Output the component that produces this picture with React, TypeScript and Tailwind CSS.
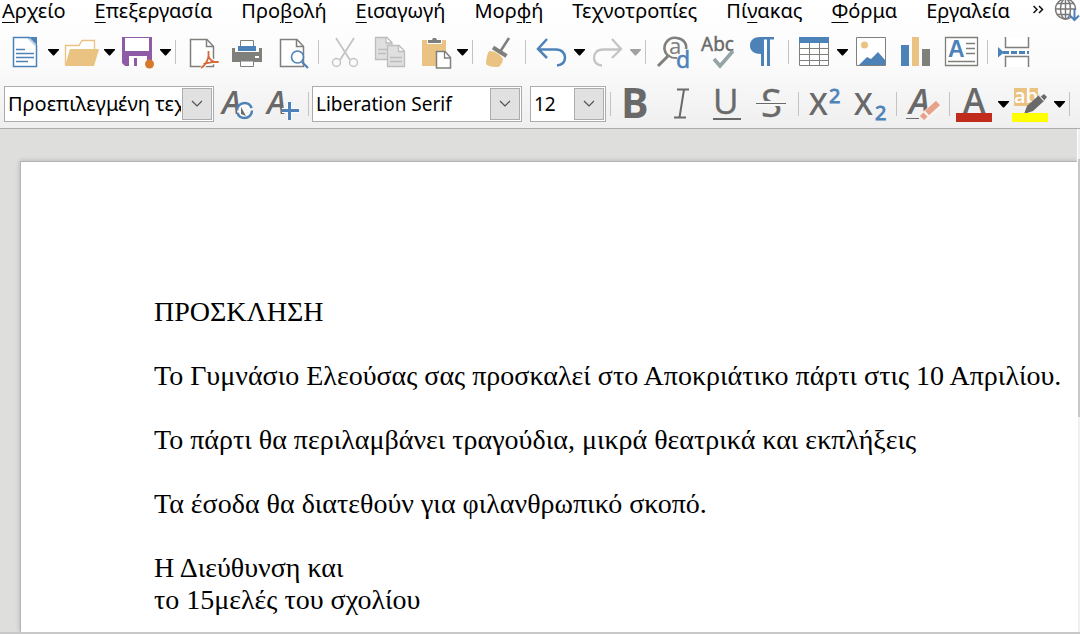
import type { ReactNode } from "react";

const BLUE = "#4d82b8";
const GRAY = "#7f7f7b";
const DARK = "#696969";
const TAN = "#eac282";
const PALE = "#c4c4c4";

const menus: [string, string, string][] = [
  ["", "Α", "ρχείο"],
  ["", "Ε", "πεξεργασία"],
  ["Προ", "β", "ολή"],
  ["", "Ε", "ισαγωγή"],
  ["Μορ", "φ", "ή"],
  ["Τε", "χ", "νοτροπίες"],
  ["Πί", "ν", "ακας"],
  ["", "Φ", "όρμα"],
  ["Ε", "ρ", "γαλεία"],
];

function Tool({ label, children }: { label: string; children: ReactNode }) {
  return (
    <button type="button" aria-label={label} className="h-10 w-[45px] shrink-0">
      <svg width="45" height="40" viewBox="0 0 45 40" fill="none" aria-hidden="true">
        {children}
      </svg>
    </button>
  );
}

function Arrow({ label, muted = false }: { label: string; muted?: boolean }) {
  return (
    <button type="button" aria-label={label} className="h-10 w-[11px] shrink-0">
      <svg width="11" height="40" viewBox="0 0 11 40" aria-hidden="true">
        <path d="M0 17h11v1l-5 5.500h-1l-5-5.500z" fill={muted ? "#a0a0a0" : "#000"} />
      </svg>
    </button>
  );
}

function Sep() {
  return (
    <div className="flex h-10 w-2 shrink-0 items-center justify-center">
      <div className="h-6 w-px bg-[#c3c3c3]" />
    </div>
  );
}

function Combo({ label, value, className }: { label: string; value: string; className: string }) {
  return (
    <div className={`relative h-9 shrink-0 ${className}`}>
      <select
        aria-label={label}
        defaultValue={value}
        className="h-full w-full appearance-none border border-[#ababb0] bg-white pr-8 pl-[3px] text-black"
      >
        <option>{value}</option>
      </select>
      <span className="pointer-events-none absolute inset-y-0.5 right-0.5 flex w-[30px] items-center justify-center border border-[#adadad] bg-[#e1e1e1]">
        <svg width="12" height="8" viewBox="0 0 12 8" fill="none" aria-hidden="true">
          <path d="M1 1l5 5 5-5" stroke="#505050" strokeWidth="1.200" />
        </svg>
      </span>
    </div>
  );
}

function MenuBar() {
  return (
    <nav className="flex h-6 items-start justify-between pl-0.5 text-xl leading-[22px]">
      <div className="flex gap-[29px]">
        {menus.map(([before, key, after]) => (
          <button key={before + key + after} type="button" className="shrink-0 whitespace-nowrap">
            {before}
            <span className="underline decoration-1 underline-offset-4">{key}</span>
            {after}
          </button>
        ))}
      </div>
      <div className="flex shrink-0 items-center gap-2">
        <button type="button" aria-label="Περισσότερα">
          <svg width="13" height="24" viewBox="0 0 13 24" fill="none" aria-hidden="true">
            <path d="M0.500 6l3.500 3.500L0.500 13M6 6l3.500 3.500L6 13" stroke="#111" strokeWidth="1.500" />
          </svg>
        </button>
        <button type="button" aria-label="Ενημέρωση">
          <svg width="26" height="24" viewBox="0 0 26 24" fill="none" aria-hidden="true">
            <g stroke="#777" strokeWidth="1.400">
              <circle cx="11.500" cy="9" r="10" />
              <ellipse cx="11.500" cy="9" rx="5" ry="10" />
              <path d="M11.500-1v20M1.500 9h20M3 3.500h17M3 14.500h17" />
            </g>
            <path d="M17 10h9v12h-9z" fill="#fff" />
            <path d="M20.500 9v11M16 15.500l4.500 4.500 4.500-4.500" stroke={BLUE} strokeWidth="2" />
          </svg>
        </button>
      </div>
    </nav>
  );
}

function StandardBar() {
  return (
    <div className="flex items-center pl-[3px]" role="toolbar" aria-label="Τυπική">
      <Tool label="Νέο">
        <path d="M10.500 5.500H26l7.500 8v21h-23z" fill="#fff" stroke={BLUE} strokeWidth="1.500" />
        <path d="M24 5h10v10z" fill={BLUE} />
        <path d="M25 7l8 8v-3l-6-6z" fill="#bcd0e5" />
        <path d="M13 17.500h9M13 21.500h18M13 25.500h18M13 29.500h12" stroke={BLUE} strokeWidth="1.500" />
      </Tool>
      <Arrow label="Νέο: επιλογές" />
      <Tool label="Άνοιγμα">
        <path d="M6.500 33V13.500H20l3-5h12.500V17" fill="#fff" stroke={TAN} strokeWidth="1.300" />
        <path d="M11 17h29l-5 17H6z" fill={TAN} />
      </Tool>
      <Arrow label="Άνοιγμα: επιλογές" />
      <Tool label="Αποθήκευση">
        <path d="M7 5h30v29H10l-3-3z" fill="#8e5ba6" />
        <path d="M10 6h24v13H10zM14 24h18v10H14z" fill="#fff" />
        <path d="M19 26h3v8h-3z" fill="#8e5ba6" />
        <circle cx="34.500" cy="32" r="4.500" fill="#d57a2d" />
      </Tool>
      <Arrow label="Αποθήκευση: επιλογές" />
      <Sep />
      <Tool label="Εξαγωγή ως PDF">
        <path d="M11.500 7.500H28l6.500 7v20h-23z" fill="#fff" stroke={GRAY} strokeWidth="1.500" />
        <path d="M27.500 8v6.500h7" stroke={GRAY} strokeWidth="1.500" />
        <path d="M22 37c3-2 6-8 7.500-13V19v5c2 4 5 7 10 6-6 0-11 1-15 3" stroke="#fff" strokeWidth="4" />
        <path d="M22 36c4-2 7-8 7.500-12V19v5c1 4 5 7 10 6-6-1-11 1-15 2" stroke="#d46a3a" strokeWidth="1.800" />
      </Tool>
      <Tool label="Εκτύπωση">
        <path d="M8 16h3v4h24v-4h3v14H8z" fill={GRAY} />
        <path d="M16.500 8.500h13v6h-13z" fill="#fff" stroke={GRAY} />
        <path d="M14 14h18v5H14z" fill={BLUE} />
        <path d="M16.500 29h13v5.500h-13z" fill="#fff" stroke={GRAY} />
        <path d="M31 24h4v2h-4z" fill="#fff" />
      </Tool>
      <Tool label="Προεπισκόπηση">
        <path d="M11.500 7.500H28l6.500 7v20h-23z" fill="#fff" stroke={GRAY} strokeWidth="1.500" />
        <path d="M27.500 8v6.500h7" stroke={GRAY} strokeWidth="1.500" />
        <circle cx="28.500" cy="25" r="6" fill="#fff" stroke={BLUE} strokeWidth="1.600" />
        <path d="M33 30l6 6" stroke={BLUE} strokeWidth="2.200" />
      </Tool>
      <Sep />
      <Tool label="Αποκοπή">
        <g stroke={PALE} strokeWidth="1.800">
          <path d="M14 6l14 22M32 6L18 28" />
          <circle cx="14.500" cy="30.500" r="4" strokeWidth="1.500" />
          <circle cx="31.500" cy="30.500" r="4" strokeWidth="1.500" />
        </g>
      </Tool>
      <Tool label="Αντιγραφή">
        <g fill="#dfdfdf" stroke="#bdbdbd" strokeWidth="1.300">
          <path d="M8.500 5.500H20l5 5v17H8.500zM19 5.500V11h6M11 17.500h10M11 21.500h8" />
          <path d="M20.500 13.500H32l5.500 5.500v15.500h-17zM31.500 13.500V19.500h6M23 25.500h12M23 29.500h12" />
        </g>
      </Tool>
      <Tool label="Επικόλληση">
        <path d="M10 8h24v26H10z" fill={TAN} />
        <path d="M15 7h5c0-3 5-3 5 0h5v5H15z" fill="#fff" />
        <path d="M16 8h4l1-2h3l1 2h4v3H16z" fill={GRAY} />
        <path d="M24.500 19.500H33l5.500 6v10.500h-14z" fill="#fff" stroke={GRAY} strokeWidth="1.500" />
        <path d="M32.500 20v6h6" stroke={GRAY} strokeWidth="1.300" />
      </Tool>
      <Arrow label="Επικόλληση: επιλογές" />
      <Sep />
      <Tool label="Αντιγραφή μορφοποίησης">
        <path d="M13 19c6 0 11 3 14 8l-1 4-3 4c-5 0-10 0-13-3 0-5 1-9 3-13z" fill={TAN} />
        <path d="M17 15.500l13.500 8.500" stroke={GRAY} strokeWidth="4" />
        <path d="M33 6L24 20" stroke={GRAY} strokeWidth="2.600" />
      </Tool>
      <Sep />
      <Tool label="Αναίρεση">
        <path d="M18 7L9 17l9 9M9 17.500h18c6 0 9 4 9 8 0 5-3 7.500-8 8" stroke={BLUE} strokeWidth="2.500" />
      </Tool>
      <Arrow label="Αναίρεση: επιλογές" />
      <Tool label="Επανάληψη">
        <path d="M27 7l9 10-9 9M36 17.500H18c-6 0-9 4-9 8 0 5 3 7.500 8 8" stroke={PALE} strokeWidth="2.300" />
      </Tool>
      <Arrow label="Επανάληψη: επιλογές" muted />
      <Sep />
      <Tool label="Εύρεση και αντικατάσταση">
        <path d="M19 24C10 14 20 4 28 6c7 1 10 6 9 11" stroke={GRAY} strokeWidth="2.600" />
        <path d="M19 23c3 3 5 3 9 3" stroke={GRAY} strokeWidth="2" />
        <path d="M19 24L9 34" stroke={GRAY} strokeWidth="3" />
        <text x="20" y="22" fontSize="22" fill={GRAY} fontFamily="Noto Sans">a</text>
        <text x="27" y="36" fontSize="23" fill={BLUE} stroke={BLUE} strokeWidth="0.500" fontFamily="Noto Sans">d</text>
      </Tool>
      <Tool label="Ορθογραφικός έλεγχος">
        <text x="7" y="19" fontSize="19" fill={DARK} stroke={DARK} strokeWidth="0.400" fontFamily="Noto Sans">Abc</text>
        <path d="M20 27l6 7 13-15" stroke="#93a3a6" strokeWidth="3.600" />
      </Tool>
      <Tool label="Σημάδια μορφοποίησης">
        <path d="M35 5v2.500h-4V34h-3V7.500h-3V34h-3V22c-7 0-11-3-11-8.500S15 5 21 5z" fill={BLUE} />
      </Tool>
      <Sep />
      <Tool label="Πίνακας">
        <path d="M7.500 5.500h29v28h-29z" fill="#fff" stroke={GRAY} />
        <path d="M17.500 11v23M27.500 11v23M8 16.500h29M8 22.500h29M8 28.500h29" stroke={GRAY} />
        <path d="M7 5h30v6H7z" fill={BLUE} />
      </Tool>
      <Arrow label="Πίνακας: επιλογές" />
      <Tool label="Εικόνα">
        <path d="M8.500 5.500h29v28h-29z" fill="#fff" stroke={GRAY} />
        <circle cx="16.500" cy="13" r="3.500" fill={TAN} />
        <path d="M11 33l8-8 4 2 7-7 7 8v5z" fill={BLUE} />
      </Tool>
      <Tool label="Διάγραμμα">
        <path d="M8 13h8v21H8z" fill={BLUE} />
        <path d="M19 5h7v29h-7z" fill={TAN} />
        <path d="M29 17h8v17h-8z" fill={GRAY} />
      </Tool>
      <Tool label="Πλαίσιο κειμένου">
        <path d="M7.500 5.500h32v28h-32z" fill="#fff" stroke={GRAY} strokeWidth="1.300" />
        <text x="10" y="25" fontSize="23" fontWeight="700" fill={BLUE} fontFamily="Liberation Sans">A</text>
        <path d="M28 11.500h9M28 16.500h9M28 21.500h9M10 29.500h27" stroke={GRAY} strokeWidth="1.500" />
      </Tool>
      <Sep />
      <Tool label="Αλλαγή σελίδας">
        <path d="M14.500 5v10.500h23V5M14.500 35V24.500h23V35" fill="#fff" stroke={GRAY} strokeWidth="1.500" />
        <path d="M7 15l6 5.500-6 5z" fill={BLUE} />
        <path d="M12 20.500h26" stroke={BLUE} strokeWidth="3" strokeDasharray="6 2" />
      </Tool>
    </div>
  );
}

function FormatBar() {
  return (
    <div className="flex items-center pl-1" role="toolbar" aria-label="Μορφοποίηση">
      <Combo label="Τεχνοτροπία παραγράφου" value="Προεπιλεγμένη τεχνοτροπία" className="w-[210px] text-xl" />
      <Tool label="Ενημέρωση τεχνοτροπίας">
        <text x="8" y="30" fontSize="32" fontWeight="600" fontStyle="italic" fill={DARK} fontFamily="Open Sans">A</text>
        <circle cx="30.500" cy="26.500" r="7.500" fill="#fafafa" stroke={BLUE} strokeWidth="2.500" strokeDasharray="21 2.500" />
        <path d="M27 23l5 9-5-2z" fill={DARK} />
      </Tool>
      <Tool label="Νέα τεχνοτροπία">
        <text x="8" y="30" fontSize="32" fontWeight="600" fontStyle="italic" fill={DARK} fontFamily="Open Sans">A</text>
        <path d="M30.500 19v17M23 26.500h17" stroke="#fafafa" strokeWidth="5" />
        <path d="M30.500 18v18M22 26.500h18" stroke={BLUE} strokeWidth="3" />
      </Tool>
      <Sep />
      <Combo label="Γραμματοσειρά" value="Liberation Serif" className="w-[210px] text-[19px]" />
      <div className="w-2 shrink-0" />
      <Combo label="Μέγεθος" value="12" className="w-[76px] text-[19px]" />
      <Sep />
      <Tool label="Έντονα">
        <text x="7" y="34" fontSize="41" fontWeight="700" fill={DARK} fontFamily="Open Sans">B</text>
      </Tool>
      <Tool label="Πλάγια">
        <path d="M18 5.500h12M15 33.500h12M25 5.500l-4.500 28" stroke={DARK} strokeWidth="2" />
      </Tool>
      <Tool label="Υπογράμμιση">
        <text x="9" y="30" fontSize="35" fill={DARK} stroke={DARK} strokeWidth="0.400" fontFamily="Open Sans">U</text>
        <path d="M9 35h28" stroke={DARK} strokeWidth="2" />
      </Tool>
      <Tool label="Διακριτή διαγραφή">
        <text x="12" y="33" fontSize="38" fill={DARK} stroke={DARK} strokeWidth="0.400" fontFamily="Open Sans">S</text>
        <path d="M8 19.500h28" stroke="#f8f8f8" strokeWidth="5" />
        <path d="M7 19.500h30" stroke={DARK} />
      </Tool>
      <Sep />
      <Tool label="Εκθέτης">
        <text x="7" y="31" fontSize="30" fontWeight="600" fill={DARK} fontFamily="Open Sans">X</text>
        <text x="27" y="19" fontSize="20" fill={BLUE} stroke={BLUE} strokeWidth="0.800" fontFamily="Noto Sans">2</text>
      </Tool>
      <Tool label="Δείκτης">
        <text x="7" y="31" fontSize="30" fontWeight="600" fill={DARK} fontFamily="Open Sans">X</text>
        <text x="28" y="36" fontSize="20" fill={BLUE} stroke={BLUE} strokeWidth="0.800" fontFamily="Noto Sans">2</text>
      </Tool>
      <Sep />
      <Tool label="Καθαρισμός μορφοποίησης">
        <text x="9" y="30" fontSize="35" fontWeight="600" fontStyle="italic" fill={DARK} fontFamily="Open Sans">A</text>
        <path d="M6 34.500h13" stroke={DARK} />
        <path d="M23 34L38 20" stroke="#f6f6f6" strokeWidth="9" />
        <path d="M22 34l3.500-3.500M27 29l11-10" stroke="#e9a28a" strokeWidth="6" />
      </Tool>
      <Sep />
      <Tool label="Χρώμα γραμματοσειράς">
        <text x="10" y="29" fontSize="34" fontWeight="600" fill={DARK} fontFamily="Open Sans">A</text>
        <path d="M3 29h36v9H3z" fill="#c02b1b" />
      </Tool>
      <Arrow label="Χρώμα γραμματοσειράς: επιλογές" />
      <Tool label="Χρώμα επισήμανσης">
        <path d="M5 4h24v18H5z" fill={TAN} />
        <text x="5" y="19" fontSize="20" fontWeight="600" fill="#fff" fontFamily="Open Sans">ab</text>
        <path d="M15 30l3-8 12-11 5 6-11 10z" fill={DARK} />
        <path d="M30 14l5-4 3 3-4 5z" fill={DARK} />
        <path d="M29 10l6 7" stroke="#ddd" strokeWidth="1.200" />
        <path d="M3 29h36v9H3z" fill="#ffff00" />
      </Tool>
      <Arrow label="Χρώμα επισήμανσης: επιλογές" />
      <Sep />
    </div>
  );
}

export default function App() {
  return (
    <div className="flex h-screen flex-col overflow-hidden bg-[#dededd] font-['Noto_Sans',sans-serif] text-black">
      <header className="flex shrink-0 flex-col border-b border-[#adadb0] bg-linear-to-b from-white via-[#fbfbfb] to-[#efefef]">
        <MenuBar />
        <div className="flex flex-col gap-3 pt-2 pb-1">
          <StandardBar />
          <FormatBar />
        </div>
      </header>
      <div className="flex min-h-0 flex-1">
        <main className="flex min-w-0 flex-1 pt-8 pl-5">
          <article className="min-w-0 flex-1 border-t border-l border-[#b4b4b4] bg-white pt-[134px] pl-[133px] font-['Liberation_Serif',serif] text-[28px] leading-8 whitespace-nowrap shadow-[0_0_5px_rgba(0,0,0,0.2)]">
            <h1 className="mb-8">ΠΡΟΣΚΛΗΣΗ</h1>
            <p className="mb-8">Το Γυμνάσιο Ελεούσας σας προσκαλεί στο Αποκριάτικο πάρτι στις 10 Απριλίου.</p>
            <p className="mb-8">Το πάρτι θα περιλαμβάνει τραγούδια, μικρά θεατρικά και εκπλήξεις</p>
            <p className="mb-8">Τα έσοδα θα διατεθούν για φιλανθρωπικό σκοπό.</p>
            <p>Η Διεύθυνση και</p>
            <p>το 15μελές του σχολίου</p>
          </article>
        </main>
        <div className="flex w-[3px] shrink-0 flex-col border-l border-white bg-[#f0f0f0] pt-[30px]">
          <div className="h-[258px] bg-[#c8c8c8]" />
        </div>
      </div>
      <footer className="h-0.5 shrink-0 bg-[#c8c8c8]" />
    </div>
  );
}
